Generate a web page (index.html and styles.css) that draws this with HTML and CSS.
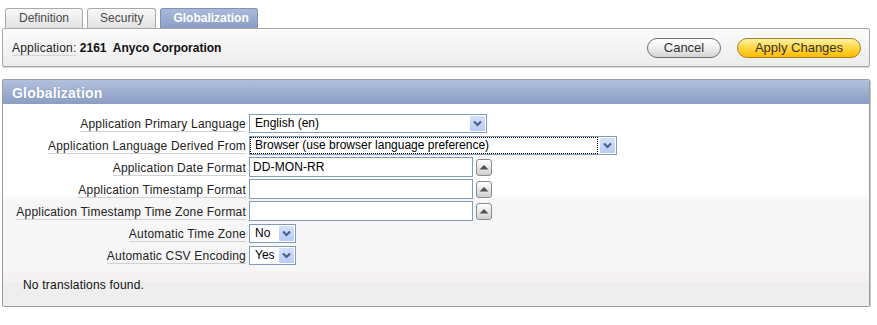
FILE: index.html
```html
<!DOCTYPE html>
<html>
<head>
<meta charset="utf-8">
<link rel="stylesheet" href="styles.css">
</head>
<body>
<div class="page">
  <div class="tabs">
    <div class="tab">Definition</div>
    <div class="tab">Security</div>
    <div class="tab active">Globalization</div>
  </div>
  <div class="topbar">
    <div class="appinfo"><span class="lbl">Application:</span> <b>2161&nbsp; Anyco Corporation</b></div>
    <div class="buttons">
      <button class="btn">Cancel</button>
      <button class="btn primary">Apply Changes</button>
    </div>
  </div>

  <div class="region">
    <div class="region-head">Globalization</div>
    <div class="form">
      <div class="label"><span>Application Primary Language</span></div>
      <div class="field">
        <div class="select w1"><span class="val">English (en)</span><span class="arrow"><svg viewBox="0 0 15 15" width="15" height="15"><path d="M4 5.5 L7.5 9 L11 5.5" fill="none" stroke="#4a5f86" stroke-width="2.2"/></svg></span></div>
      </div>

      <div class="label"><span>Application Language Derived From</span></div>
      <div class="field">
        <div class="select w2"><span class="val focus">Browser (use browser language preference)</span><span class="arrow"><svg viewBox="0 0 15 15" width="15" height="15"><path d="M4 5.5 L7.5 9 L11 5.5" fill="none" stroke="#4a5f86" stroke-width="2.2"/></svg></span></div>
      </div>

      <div class="label"><span>Application Date Format</span></div>
      <div class="field">
        <div class="input">DD-MON-RR</div>
        <span class="upbtn"><svg viewBox="0 0 16 17" width="16" height="17"><polygon points="3.5,10.5 8,6 12.5,10.5" fill="#505050"/></svg></span>
      </div>

      <div class="label"><span>Application Timestamp Format</span></div>
      <div class="field">
        <div class="input"></div>
        <span class="upbtn"><svg viewBox="0 0 16 17" width="16" height="17"><polygon points="3.5,10.5 8,6 12.5,10.5" fill="#505050"/></svg></span>
      </div>

      <div class="label"><span>Application Timestamp Time Zone Format</span></div>
      <div class="field">
        <div class="input"></div>
        <span class="upbtn"><svg viewBox="0 0 16 17" width="16" height="17"><polygon points="3.5,10.5 8,6 12.5,10.5" fill="#505050"/></svg></span>
      </div>

      <div class="label"><span>Automatic Time Zone</span></div>
      <div class="field">
        <div class="select w3"><span class="val">No</span><span class="arrow"><svg viewBox="0 0 15 15" width="15" height="15"><path d="M4 5.5 L7.5 9 L11 5.5" fill="none" stroke="#4a5f86" stroke-width="2.2"/></svg></span></div>
      </div>

      <div class="label"><span>Automatic CSV Encoding</span></div>
      <div class="field">
        <div class="select w3"><span class="val">Yes</span><span class="arrow"><svg viewBox="0 0 15 15" width="15" height="15"><path d="M4 5.5 L7.5 9 L11 5.5" fill="none" stroke="#4a5f86" stroke-width="2.2"/></svg></span></div>
      </div>
    </div>
    <div class="region-foot">No translations found.</div>
  </div>
</div>
</body>
</html>
```

FILE: styles.css
```css
* { box-sizing: border-box; }
body {
  margin: 0;
  background: #fff;
  font-family: "Liberation Sans", Arial, sans-serif;
  font-size: 12px;
  color: #222;
}
.page {
  padding: 8px 7px 0 2px;
}
.tabs {
  display: flex;
  gap: 4px;
  margin-left: 3px;
  height: 20px;
}
.tab {
  height: 20px;
  line-height: 19px;
  padding: 0 13px;
  border: 1px solid #a9a9a9;
  border-bottom: none;
  border-radius: 3px 3px 0 0;
  background: linear-gradient(#f8f8f8, #e2e2e2);
  color: #4a4a4a;
  font-size: 12px;
}
.tab:nth-child(2) { padding: 0 12px; }
.tab.active {
  background: linear-gradient(#a9badb, #8a9ec5);
  border-color: #8091b3;
  color: #fff;
  font-weight: bold;
  padding: 0 11px 0 12px;
  width: 98px;
}
.topbar {
  height: 39px;
  border: 1px solid #a8a8a8;
  border-radius: 2px;
  background: linear-gradient(#fbfbfb, #ececec);
  box-shadow: 0 1px 0 #d6d6d6;
  display: flex;
  align-items: center;
  justify-content: space-between;
  padding: 0 8px 0 9px;
}
.appinfo { color: #111; }
.appinfo .lbl {
  border-bottom: 1px solid #d4d4d4;
  color: #222;
  letter-spacing: 0.2px;
}
.buttons {
  display: flex;
  gap: 16px;
}
.btn {
  height: 20px;
  border: 1px solid #6e6e6e;
  border-radius: 10px;
  background: linear-gradient(#ffffff, #f2f2f2 45%, #d4d4d4);
  font-family: "Liberation Sans", Arial, sans-serif;
  font-size: 13px;
  color: #333;
  padding: 0 15px;
  line-height: 17px;
}
.btn.primary {
  border-color: #a1841e;
  background: linear-gradient(#fff3a8, #ffd84a 45%, #ffbc00);
  padding: 0 15px;
  width: 124px;
}
.btn:first-child { width: 74px; padding: 0; }
.region {
  margin-top: 12px;
  border: 1px solid #9c9c9c;
  border-radius: 2px;
  box-shadow: 1px 1px 0 #c8c8c8;
}
.region-head {
  height: 25px;
  line-height: 26px;
  padding-left: 9px;
  background: linear-gradient(#b1c0dc, #8b9dc3);
  color: #fff;
  font-weight: bold;
  font-size: 14px;
  letter-spacing: 0.2px;
  text-shadow: 0 0 1px #7587ad;
  border-bottom: 1px solid #fff;
}
.form {
  display: grid;
  grid-template-columns: 243px 1fr;
  column-gap: 3px;
  grid-auto-rows: 22px;
  padding: 8px 0 4px 0;
  background: linear-gradient(#ffffff 0, #ffffff 89px, #f6f6f6 95px);
}
.label {
  text-align: right;
  padding-top: 4px;
}
.label span {
  display: inline-block;
  line-height: 13px;
  border-bottom: 1px solid #d2d2d2;
  color: #222;
  letter-spacing: 0.2px;
}
.field {
  display: flex;
  align-items: center;
  gap: 3px;
  height: 20px;
}
.select {
  display: flex;
  align-items: center;
  height: 19px;
  border: 1px solid #7f9db9;
  background: #fff;
  color: #000;
}
.select .val {
  flex: 1;
  padding-left: 5px;
  line-height: 15px;
  white-space: nowrap;
  overflow: hidden;
}
.select .val.focus {
  outline: 1px dotted #000;
  margin-left: 1px;
  padding-left: 4px;
  margin-right: 2px;
}
.select .arrow {
  width: 15px;
  height: 15px;
  margin: 0 1px;
  background: linear-gradient(#d4e1fc, #b7cbf5);
  border-radius: 1px;
  display: flex;
}
.w1 { width: 238px; }
.w2 { width: 368px; }
.w3 { width: 47px; }
.input {
  width: 224px;
  height: 20px;
  border: 1px solid #7f9db9;
  background: #fff;
  color: #000;
  padding-left: 3px;
  line-height: 18px;
  letter-spacing: 0.1px;
}
.upbtn {
  width: 16px;
  height: 17px;
  border: 1px solid #8a8a8a;
  border-radius: 3px;
  background: linear-gradient(#ffffff, #e4e4e4 60%, #cfcfcf);
  display: flex;
  align-items: center;
  justify-content: center;
  overflow: hidden;
}
.upbtn svg { flex: none; }
.region-foot {
  height: 35px;
  padding: 7px 0 0 20px;
  line-height: 14px;
  color: #111;
  letter-spacing: 0.2px;
  background: linear-gradient(#f6f6f6 0, #f3f3f3 3px, #f7eef3 5px, #f6f1ef 8px, #f3f3ee 10px, #eeeeee 12px);
}
```
